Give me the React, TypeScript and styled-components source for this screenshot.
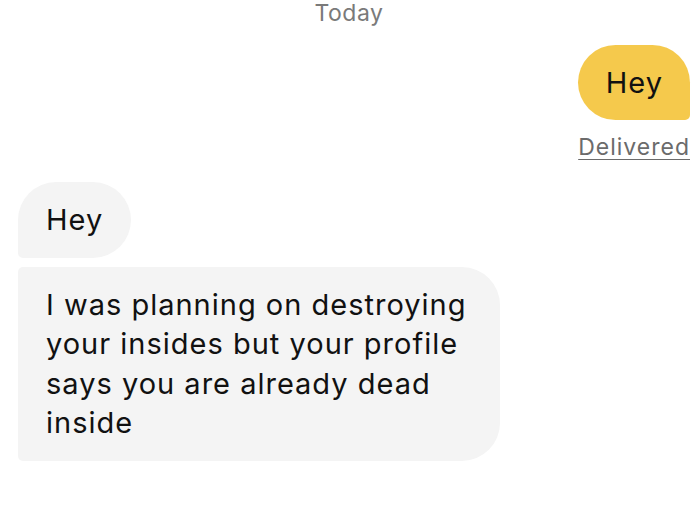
import styled, { createGlobalStyle } from "styled-components";

const GlobalStyle = createGlobalStyle`
  body {
    margin: 0;
    background: #fff;
    font-family: "Inter", "Noto Sans", sans-serif;
  }
`;

export default function App() {
  return (
    <>
      <GlobalStyle />
      <Chat>
        <DayLabel>Today</DayLabel>
        <OutRow>
          <OutBubble>Hey</OutBubble>
          <Status>Delivered</Status>
        </OutRow>
        <InGroup>
          <InBubble $first>Hey</InBubble>
          <InBubble $last $wide>
            I was planning on destroying your insides but your profile says you
            are already dead inside
          </InBubble>
        </InGroup>
      </Chat>
    </>
  );
}

const Chat = styled.div`
  width: 700px;
  height: 531px;
  display: flex;
  flex-direction: column;
  box-sizing: border-box;
  padding: 0 10px 0 18px;
  overflow: hidden;
`;

const DayLabel = styled.div`
  text-align: center;
  color: #7a7a7a;
  font-size: 23px;
  letter-spacing: 0.5px;
  line-height: 26px;
  margin-left: -10px;
`;

const OutRow = styled.div`
  display: flex;
  flex-direction: column;
  align-items: flex-end;
  margin-top: 19px;
`;

const OutBubble = styled.div`
  background: #f5c94c;
  color: #111;
  font-size: 29px;
  letter-spacing: 1px;
  height: 75px;
  box-sizing: border-box;
  padding: 0 27px 0 28px;
  display: flex;
  align-items: center;
  border-radius: 38px 38px 5px 38px;
`;

const Status = styled.div`
  margin-top: 13px;
  color: #6b6b6b;
  font-size: 23px;
  letter-spacing: 1px;
  text-decoration: underline;
  text-underline-offset: 4px;
  text-decoration-thickness: 1px;
`;

const InGroup = styled.div`
  display: flex;
  flex-direction: column;
  align-items: flex-start;
  gap: 9px;
  margin-top: 21px;
`;

const InBubble = styled.div<{ $first?: boolean; $last?: boolean; $wide?: boolean }>`
  background: #f4f4f4;
  color: #111;
  font-size: 29px;
  letter-spacing: 1px;
  line-height: 39.5px;
  box-sizing: border-box;
  padding: ${(p) => (p.$wide ? "18px 28px 18px 28px" : "18px 28px")};
  width: ${(p) => (p.$wide ? "482px" : "auto")};
  border-radius: ${(p) =>
    p.$first ? "38px 38px 38px 5px" : p.$last ? "5px 38px 38px 5px" : "5px"};
`;
